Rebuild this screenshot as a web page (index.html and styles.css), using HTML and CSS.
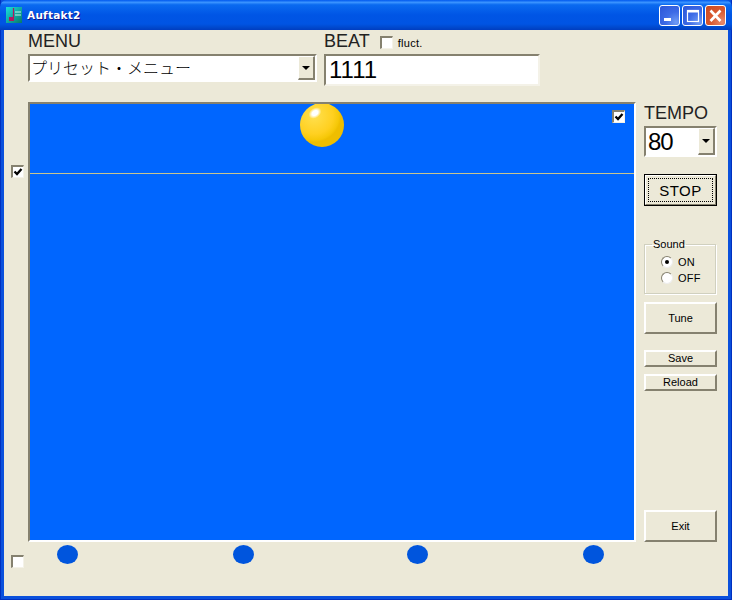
FILE: index.html
```html
<!DOCTYPE html>
<html lang="en">
<head>
    <meta charset="UTF-8">
    <title>Auftakt2</title>
    <link rel="stylesheet" href="styles.css">
</head>
<body>

    <div class="window">
        <div class="titlebar">
            <svg class="app-icon" width="16" height="16" viewBox="0 0 16 16">
                <defs>
                    <linearGradient id="iconFill" x1="0" y1="0" x2="1" y2="1">
                        <stop offset="0" stop-color="#18e0e0"/>
                        <stop offset="1" stop-color="#087868"/>
                    </linearGradient>
                </defs>
                <rect width="16" height="16" fill="url(#iconFill)"/>
                <path d="M7.5 1v10" stroke="#b01860" stroke-width="1.2"/>
                <path d="M9 5h6M9 8h6" stroke="#c8f0e8" stroke-width="1"/>
                <rect x="3" y="10" width="5" height="4" fill="#b01860"/>
            </svg>
            <span class="title">Auftakt2</span>
            <div class="caption-btns">
                <div class="cap-btn cap-blue">
                    <svg width="21" height="21" viewBox="0 0 21 21"><rect x="5" y="13" width="7" height="3" fill="#fff"/></svg>
                </div>
                <div class="cap-btn cap-blue">
                    <svg width="21" height="21" viewBox="0 0 21 21"><rect x="5.5" y="5.5" width="11" height="11" fill="none" stroke="#fff" stroke-width="1.2"/><rect x="5" y="5" width="12" height="2.5" fill="#fff"/></svg>
                </div>
                <div class="cap-btn cap-red">
                    <svg width="21" height="21" viewBox="0 0 21 21"><path d="M5.5 5.5l10 10.5M15.5 5.5l-10 10.5" stroke="#fff" stroke-width="2.6"/></svg>
                </div>
            </div>
        </div>

        <div class="client">
            <div class="top-row">
                <div class="menu-col">
                    <div class="big-label">MENU</div>
                    <div class="combo menu-combo">
                        <span class="combo-text jp">プリセット・メニュー</span>
                        <span class="drop-btn"><i class="arrow"></i></span>
                    </div>
                </div>
                <div class="beat-col">
                    <div class="beat-head">
                        <span class="big-label">BEAT</span>
                        <span class="check"></span>
                        <span class="small-label">fluct.</span>
                    </div>
                    <div class="beat-input">1111</div>
                </div>
            </div>

            <div class="middle">
                <div class="gutter">
                    <span class="check line-check">
                        <svg width="10" height="10" viewBox="0 0 10 10"><path d="M1.5 4.5l2.5 2.5L8.5 2" fill="none" stroke="#000" stroke-width="2.3"/></svg>
                    </span>
                    <span class="check bottom-check"></span>
                </div>

                <div class="stage">
                    <div class="canvas">
                        <div class="beat-line"></div>
                        <svg class="ball" width="44" height="44" viewBox="0 0 44 44">
                            <defs>
                                <radialGradient id="ballFill" cx="0.32" cy="0.28" r="0.78">
                                    <stop offset="0" stop-color="#ffe050"/>
                                    <stop offset="0.55" stop-color="#ffd020"/>
                                    <stop offset="0.72" stop-color="#f6c808"/>
                                    <stop offset="0.78" stop-color="#efbe00"/>
                                    <stop offset="1" stop-color="#efbe00"/>
                                </radialGradient>
                                <radialGradient id="ballShine">
                                    <stop offset="0.45" stop-color="#fff"/>
                                    <stop offset="1" stop-color="#fff" stop-opacity="0"/>
                                </radialGradient>
                            </defs>
                            <circle cx="22" cy="22" r="22" fill="url(#ballFill)"/>
                            <ellipse cx="15" cy="10" rx="7" ry="5" fill="url(#ballShine)" transform="rotate(-35 15 10)"/>
                        </svg>
                        <span class="check canvas-check">
                            <svg width="10" height="10" viewBox="0 0 10 10"><path d="M1.5 4.5l2.5 2.5L8.5 2" fill="none" stroke="#000" stroke-width="2.3"/></svg>
                        </span>
                    </div>
                    <div class="dots">
                        <span class="dot"></span>
                        <span class="dot"></span>
                        <span class="dot"></span>
                        <span class="dot"></span>
                    </div>
                </div>

                <div class="sidebar">
                    <div class="big-label tempo-label">TEMPO</div>
                    <div class="combo tempo-combo">
                        <span class="combo-text tempo-text">80</span>
                        <span class="drop-btn"><i class="arrow"></i></span>
                    </div>
                    <div class="btn btn-default stop-btn"><span class="focus-box">STOP</span></div>
                    <fieldset class="sound">
                        <legend>Sound</legend>
                        <div class="radio-row"><span class="radio on"></span>ON</div>
                        <div class="radio-row"><span class="radio"></span>OFF</div>
                    </fieldset>
                    <div class="btn tune-btn">Tune</div>
                    <div class="btn small-btn save-btn">Save</div>
                    <div class="btn small-btn reload-btn">Reload</div>
                    <div class="btn exit-btn">Exit</div>
                </div>
            </div>
        </div>
    </div>

</body>
</html>
```

FILE: styles.css
```css
* {
    box-sizing: border-box;
}

html, body {
    margin: 0;
    padding: 0;
    background: #ece9d8;
}

body {
    width: 732px;
    height: 600px;
    overflow: hidden;
    font-family: "Liberation Sans", Arial, sans-serif;
    color: #000;
}

.window {
    width: 732px;
    height: 600px;
    display: flex;
    flex-direction: column;
    background: #0a50dc;
    box-shadow: inset 1px 0 0 #0030c0, inset -1px 0 0 #0030c0, inset 0 -1px 0 #0030c0;
}

.titlebar {
    height: 30px;
    flex: none;
    display: flex;
    align-items: center;
    padding: 0 6px 0 6px;
    border-radius: 7px 7px 0 0;
    background: linear-gradient(to bottom, #0058ee 0%, #3a93ff 8%, #0a6af0 16%, #0055e5 50%, #0054e3 80%, #0048cc 92%, #003dc0 100%);
}

.app-icon {
    flex: none;
    margin-right: 5px;
}

.title {
    color: #fff;
    font-family: "DejaVu Sans", sans-serif;
    font-weight: bold;
    font-size: 10.5px;
    letter-spacing: 0.25px;
    text-shadow: 1px 1px 0 #0f1089;
}

.caption-btns {
    margin-left: auto;
    display: flex;
    gap: 2px;
}

.cap-btn {
    width: 21px;
    height: 21px;
    border: 1px solid #fff;
    border-radius: 3px;
    overflow: hidden;
}

.cap-btn svg {
    display: block;
    margin: -1px;
}

.cap-blue {
    background: radial-gradient(circle at 85% 85%, #6f9bf5 0%, #3d6be6 45%, #2b55d8 100%);
}

.cap-red {
    background: radial-gradient(circle at 85% 85%, #e98a6c 0%, #d9582f 50%, #c84a20 100%);
}

.client {
    flex: 1;
    margin: 0 4px 4px 4px;
    background: #ece9d8;
    padding-top: 1px;
    display: flex;
    flex-direction: column;
}

.top-row {
    height: 71px;
    flex: none;
    display: flex;
    padding-left: 24px;
}

.menu-col {
    width: 296px;
}

.big-label {
    font-size: 18px;
    line-height: 20px;
    height: 20px;
    font-weight: normal;
    color: #222;
}

.small-label {
    font-size: 11px;
    letter-spacing: 0.3px;
}

.combo {
    display: flex;
    background: #fff;
    border-top: 2px solid #85816f;
    border-left: 2px solid #85816f;
    border-right: 2px solid #fff;
    border-bottom: 2px solid #fff;
}

.menu-combo {
    width: 289px;
    height: 28px;
    margin-top: 3px;
}

.combo-text {
    flex: 1;
    padding-left: 1px;
    white-space: nowrap;
}

.jp {
    font-family: "Noto Sans CJK JP", sans-serif;
    font-size: 16px;
    font-weight: 300;
    line-height: 22px;
}

.drop-btn {
    flex: none;
    width: 17px;
    display: flex;
    align-items: center;
    justify-content: center;
    background: #ece9d8;
    border-top: 1px solid #fff;
    border-left: 1px solid #fff;
    border-right: 2px solid #85816f;
    border-bottom: 2px solid #85816f;
}

.arrow {
    display: block;
    width: 0;
    height: 0;
    border-left: 4px solid transparent;
    border-right: 4px solid transparent;
    border-top: 4px solid #000;
}

.beat-head {
    display: flex;
    align-items: center;
    height: 20px;
}

.beat-head .check {
    margin: 3px 5px 0 10px;
}

.beat-head .small-label {
    margin-top: 3px;
}

.beat-input {
    width: 216px;
    height: 32px;
    margin-top: 3px;
    background: #fff;
    border-top: 2px solid #85816f;
    border-left: 2px solid #85816f;
    border-right: 2px solid #f4f2e8;
    border-bottom: 2px solid #f4f2e8;
    font-size: 24px;
    line-height: 28px;
    padding-left: 3px;
}

.check {
    display: inline-block;
    flex: none;
    width: 13px;
    height: 13px;
    background: #fff;
    border-top: 2px solid #85816f;
    border-left: 2px solid #85816f;
    border-right: 1px solid #f4f2e8;
    border-bottom: 1px solid #f4f2e8;
}

.check svg {
    display: block;
}

.middle {
    flex: 1;
    display: flex;
}

.gutter {
    width: 24px;
    flex: none;
    display: flex;
    flex-direction: column;
    padding: 63px 0 0 7px;
}

.bottom-check {
    margin-top: 377px;
}

.stage {
    width: 608px;
    flex: none;
}

.canvas {
    position: relative;
    height: 440px;
    background: #0066ff;
    border-top: 2px solid #85816f;
    border-left: 2px solid #85816f;
    border-right: 2px solid #fff;
    border-bottom: 2px solid #fff;
    overflow: hidden;
}

.beat-line {
    position: absolute;
    left: 0;
    right: 0;
    top: 69px;
    height: 1px;
    background: #c8c490;
}

.ball {
    position: absolute;
    left: 270px;
    top: -1px;
}

.canvas-check {
    position: absolute;
    left: 582px;
    top: 6px;
}

.dots {
    display: flex;
    padding-top: 3px;
}

.dot {
    width: 21px;
    height: 19px;
    border-radius: 50%;
    background: #0055dd;
    margin-left: 155px;
}

.dot:first-child {
    margin-left: 29px;
}

.dot:nth-child(3) {
    margin-left: 153px;
}

.sidebar {
    margin-left: 8px;
    width: 73px;
    flex: none;
    display: flex;
    flex-direction: column;
    align-items: flex-start;
}

.tempo-label {
    margin-top: 1px;
}

.tempo-combo {
    width: 73px;
    height: 31px;
    margin-top: 3px;
}

.tempo-text {
    font-size: 24px;
    line-height: 27px;
    padding-left: 2px;
    letter-spacing: -1px;
}

.btn {
    width: 73px;
    display: flex;
    align-items: center;
    justify-content: center;
    background: #ece9d8;
    border-top: 2px solid #fff;
    border-left: 2px solid #fff;
    border-right: 2px solid #85816f;
    border-bottom: 2px solid #85816f;
    font-size: 11px;
}

.btn-default {
    outline: 1px solid #000;
    outline-offset: -1px;
}

.stop-btn {
    height: 32px;
    margin-top: 17px;
    font-size: 15px;
    padding: 2px;
}

.focus-box {
    flex: 1;
    align-self: stretch;
    display: flex;
    align-items: center;
    justify-content: center;
    border: 1px dotted #000;
    letter-spacing: 0.5px;
}

.sound {
    width: 72px;
    height: 55px;
    margin: 33px 0 0 0;
    padding: 4px 0 0 16px;
    border: 1px solid #d0d0bf;
    box-shadow: 1px 1px 0 #fff, inset 1px 1px 0 #fff;
    font-size: 11px;
}

.sound legend {
    padding: 0 1px;
    margin-left: -9px;
    line-height: 11px;
}

.radio-row {
    display: flex;
    align-items: center;
    height: 16px;
    gap: 5px;
    font-size: 11px;
    letter-spacing: 0.2px;
}

.radio {
    width: 12px;
    height: 12px;
    border-radius: 50%;
    background: #fff;
    border: 1px solid #85816f;
    border-right-color: #eee;
    border-bottom-color: #eee;
    position: relative;
}

.radio.on::after {
    content: "";
    position: absolute;
    left: 3px;
    top: 3px;
    width: 4px;
    height: 4px;
    border-radius: 50%;
    background: #000;
}

.tune-btn {
    height: 32px;
    margin-top: 8px;
}

.small-btn {
    height: 17px;
    padding-bottom: 2px;
}

.save-btn {
    margin-top: 16px;
}

.reload-btn {
    margin-top: 7px;
}

.exit-btn {
    height: 32px;
    margin-top: 119px;
}
```
